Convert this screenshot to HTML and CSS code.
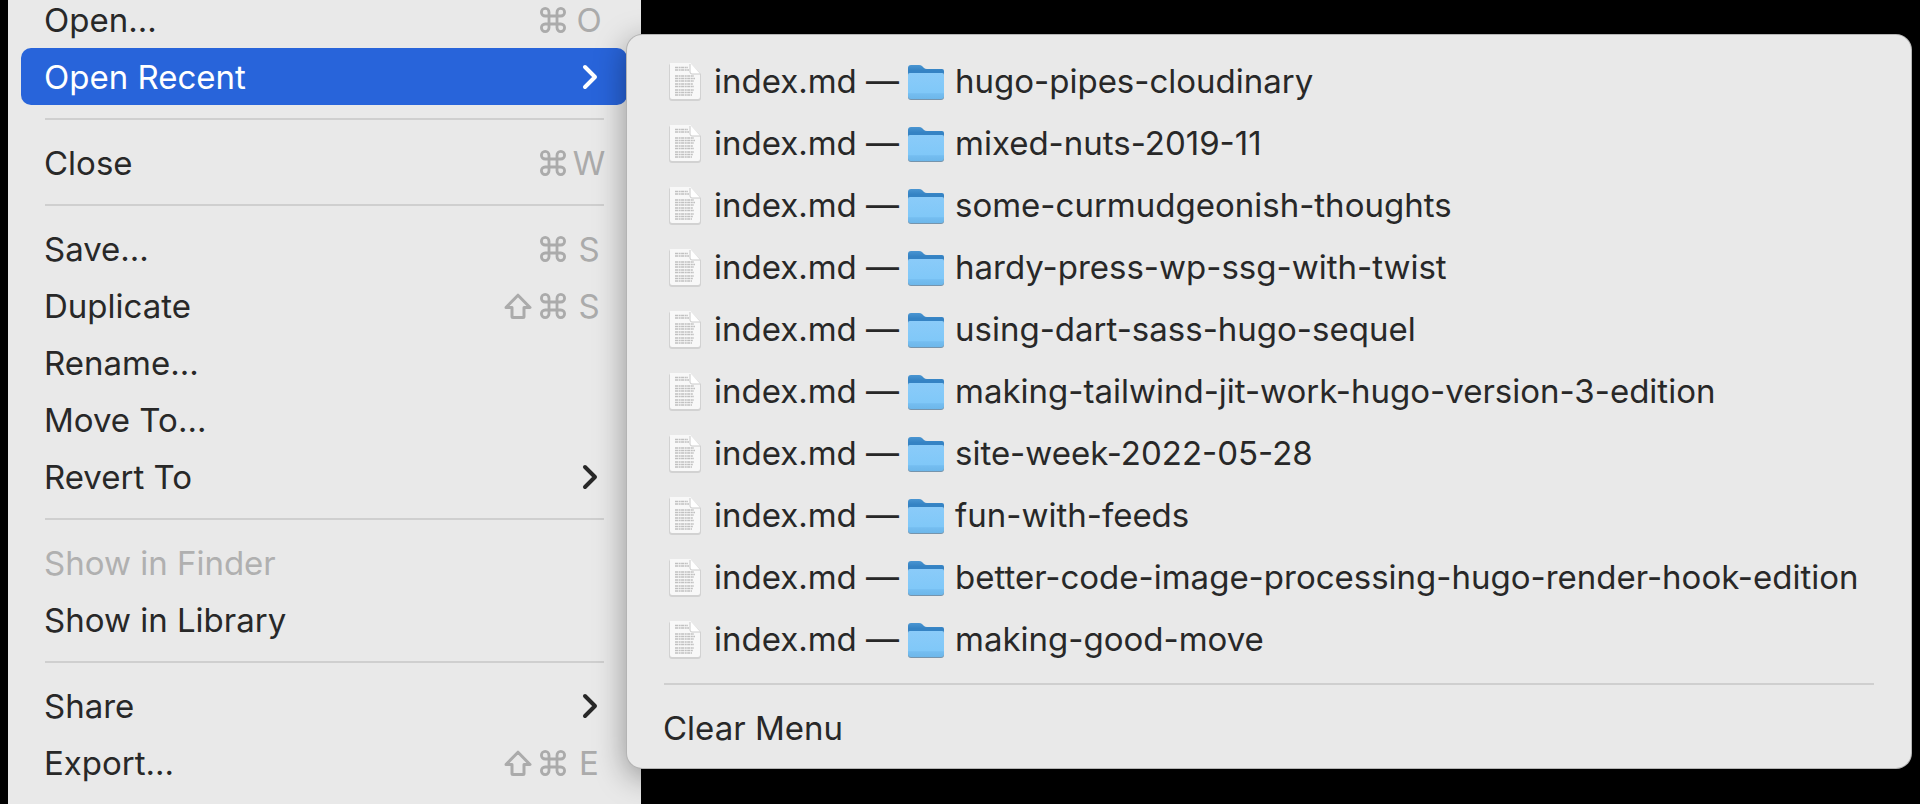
FILE: index.html
```html
<!DOCTYPE html>
<html lang="en">
<head>
<meta charset="utf-8">
<title>File menu</title>
<link rel="stylesheet" href="styles.css">
</head>
<body>
<svg class="sprite" aria-hidden="true">
  <defs>
    <linearGradient id="folder-back" x1="0" y1="0" x2="0" y2="1"><stop offset="0" stop-color="#4a96d2"/><stop offset="0.3" stop-color="#3583c4"/></linearGradient>
    <linearGradient id="folder-front" x1="0" y1="0" x2="0" y2="1"><stop offset="0" stop-color="#8acbf9"/><stop offset="0.75" stop-color="#80c8f8"/><stop offset="0.8" stop-color="#74bdf0"/><stop offset="1" stop-color="#6db7ea"/></linearGradient>
  </defs>
  <symbol id="command" viewBox="0 0 26 26"><path d="M9 9H17V17H9ZM9 9H5.2A3.8 3.8 0 1 1 9 5.200ZM17 9V5.200A3.800 3.800 0 1 1 20.800 9ZM17 17H20.800A3.800 3.800 0 1 1 17 20.800ZM9 17V20.800A3.800 3.800 0 1 1 5.200 17Z" fill="none" stroke="currentColor" stroke-width="2.800"/></symbol>
  <symbol id="shift" viewBox="0 0 28 26"><path d="M14 2.200L26 14.500H20V23.500Q20 24.500 19 24.500H9Q8 24.500 8 23.500V14.500H2Z" fill="none" stroke="currentColor" stroke-width="3" stroke-linejoin="round"/></symbol>
  <symbol id="chevron" viewBox="0 0 16 26"><path d="M3 3L13 13L3 23" fill="none" stroke="currentColor" stroke-width="4" stroke-linecap="round" stroke-linejoin="round"/></symbol>
  <symbol id="file" viewBox="0 0 34 40">
    <path d="M2 2H22L33 12V36Q33 39 30 39H4Q1 39 1 36V3Z" fill="#d2d2d2"/>
    <path d="M2 1H22L32 12V35Q32 37 30 37H4Q2 37 2 35Z" fill="#f8f8f8"/>
    <path d="M7 5.500H20M7 8H21M7 14H26M7 16.500H27M7 19H26M7 22H25M7 24.500H26M7 28H26M7 30.500H25M7 33H24" stroke="#c0c0c0" stroke-width="1.700" stroke-dasharray="3 .6 2 .5"/>
    <path d="M22 1V10Q22 12 24 12H32Z" fill="#fff"/>
    <path d="M22 2V10Q22 12 24 12H32" fill="none" stroke="#cacaca" stroke-width="1"/>
  </symbol>
  <symbol id="folder" viewBox="0 0 38 38">
    <path d="M1 5Q1 2 4 2H12Q14 2 15 3L17 5Q18 6 20 6H35Q37 6 37 8V20H1Z" fill="url(#folder-back)"/>
    <path d="M1 12Q1 10 3 10H35Q37 10 37 12V34Q37 37 34 37H4Q1 37 1 34Z" fill="#7694ac"/>
    <path d="M1 12Q1 10 3 10H35Q37 10 37 12V33Q37 36 34 36H4Q1 36 1 33Z" fill="url(#folder-front)"/>
  </symbol>
</svg>
<main class="stage">
  <nav class="menu" aria-label="File">
    <button class="item">Open...<span class="keys"><svg class="cmd"><use href="#command"/></svg><kbd>O</kbd></span></button>
    <button class="item active" aria-haspopup="menu" aria-expanded="true">Open Recent<svg class="chevron"><use href="#chevron"/></svg></button>
    <hr>
    <button class="item">Close<span class="keys"><svg class="cmd"><use href="#command"/></svg><kbd>W</kbd></span></button>
    <hr>
    <button class="item">Save...<span class="keys"><svg class="cmd"><use href="#command"/></svg><kbd>S</kbd></span></button>
    <button class="item">Duplicate<span class="keys"><svg class="shift"><use href="#shift"/></svg><svg class="cmd"><use href="#command"/></svg><kbd>S</kbd></span></button>
    <button class="item">Rename...</button>
    <button class="item">Move To...</button>
    <button class="item" aria-haspopup="menu">Revert To<svg class="chevron"><use href="#chevron"/></svg></button>
    <hr>
    <button class="item" disabled>Show in Finder</button>
    <button class="item">Show in Library</button>
    <hr>
    <button class="item" aria-haspopup="menu">Share<svg class="chevron"><use href="#chevron"/></svg></button>
    <button class="item">Export...<span class="keys"><svg class="shift"><use href="#shift"/></svg><svg class="cmd"><use href="#command"/></svg><kbd>E</kbd></span></button>
  </nav>
  <nav class="submenu" aria-label="Open Recent">
    <button class="recent"><svg class="file"><use href="#file"/></svg><span class="name">index.md —</span><svg class="folder"><use href="#folder"/></svg><span>hugo-pipes-cloudinary</span></button>
    <button class="recent"><svg class="file"><use href="#file"/></svg><span class="name">index.md —</span><svg class="folder"><use href="#folder"/></svg><span>mixed-nuts-2019-11</span></button>
    <button class="recent"><svg class="file"><use href="#file"/></svg><span class="name">index.md —</span><svg class="folder"><use href="#folder"/></svg><span>some-curmudgeonish-thoughts</span></button>
    <button class="recent"><svg class="file"><use href="#file"/></svg><span class="name">index.md —</span><svg class="folder"><use href="#folder"/></svg><span>hardy-press-wp-ssg-with-twist</span></button>
    <button class="recent"><svg class="file"><use href="#file"/></svg><span class="name">index.md —</span><svg class="folder"><use href="#folder"/></svg><span>using-dart-sass-hugo-sequel</span></button>
    <button class="recent"><svg class="file"><use href="#file"/></svg><span class="name">index.md —</span><svg class="folder"><use href="#folder"/></svg><span>making-tailwind-jit-work-hugo-version-3-edition</span></button>
    <button class="recent"><svg class="file"><use href="#file"/></svg><span class="name">index.md —</span><svg class="folder"><use href="#folder"/></svg><span>site-week-2022-05-28</span></button>
    <button class="recent"><svg class="file"><use href="#file"/></svg><span class="name">index.md —</span><svg class="folder"><use href="#folder"/></svg><span>fun-with-feeds</span></button>
    <button class="recent"><svg class="file"><use href="#file"/></svg><span class="name">index.md —</span><svg class="folder"><use href="#folder"/></svg><span>better-code-image-processing-hugo-render-hook-edition</span></button>
    <button class="recent"><svg class="file"><use href="#file"/></svg><span class="name">index.md —</span><svg class="folder"><use href="#folder"/></svg><span>making-good-move</span></button>
    <hr>
    <button class="item">Clear Menu</button>
  </nav>
</main>
</body>
</html>
```

FILE: styles.css
```css
* { box-sizing: border-box; }

body {
  margin: 0;
  background: #000;
  color: #282828;
  font: 400 33px/40px Inter, "Liberation Sans", sans-serif;
}

.sprite { position: absolute; width: 0; height: 0; }

.stage {
  display: grid;
  grid-template-columns: minmax(0, 619fr) minmax(0, 1284fr);
  align-items: start;
  min-height: 100vh;
  padding: 0 9px 0 8px;
  overflow: hidden;
}

/* The top of the menu is scrolled slightly out of view. */
.menu {
  align-self: stretch;
  margin: -9px -14px 0 0;
  padding: 0 14px 0 13px;
  background: #e9e9e9;
}

.submenu {
  position: relative;
  margin-top: 35px;
  padding: 15px 14px 12px 13px;
  border-radius: 15px;
  background: #e9e9e9;
  box-shadow: 0 0 0 1px #b4b4b4, 0 8px 32px rgba(0, 0, 0, 0.4);
}

button {
  display: flex;
  align-items: center;
  width: 100%;
  margin: 0;
  padding: 0 23px;
  border: 0;
  border-radius: 10px;
  background: none;
  color: inherit;
  font: inherit;
  text-align: left;
  white-space: nowrap;
}

button:disabled { color: #b0b0b0; }

.item { justify-content: space-between; height: 57px; }
.active { background: #2864da; color: #fff; }

hr {
  height: 2px;
  margin: 13px 23px 14px 24px;
  border: 0;
  background: #cfcfcf;
}

.keys { display: flex; align-items: center; gap: 8px; color: #ababab; }
kbd { display: flex; justify-content: center; width: 30px; font: inherit; }
.cmd { width: 26px; height: 26px; }
.shift { width: 28px; height: 26px; }
.chevron { width: 16px; height: 26px; margin-right: 6px; }

.recent { height: 62px; padding: 0 0 0 28px; }
.file { flex: none; width: 34px; height: 40px; margin: 2px 12px 0 0; }
.name { flex: none; width: 193px; }
.folder { flex: none; width: 38px; height: 38px; margin: 2px 10px 0 0; }
```
